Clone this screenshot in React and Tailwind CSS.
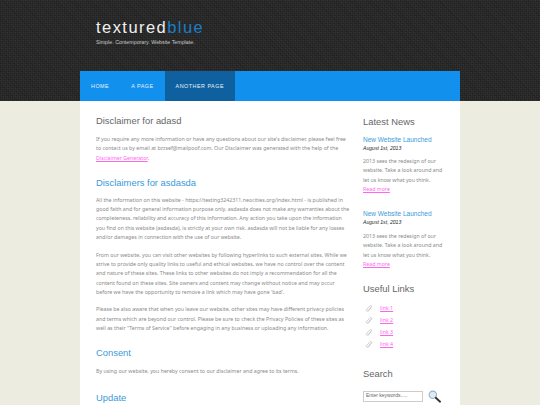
import React from 'react';

function Clip() {
  return (
    <svg viewBox="0 0 12 12" className="w-[8px] h-[8px] text-[#bdbdbd]" fill="none" stroke="currentColor" strokeWidth="1.1">
      <path d="M9.5 3 4.2 8.6c-.8.8-2 .7-2.3.1-.4-.6-.2-1.4.4-2l5-5.4c.7-.7 1.8-.8 2.4-.2.6.6.5 1.6-.2 2.4L4.6 9.9" />
    </svg>
  );
}

function NewsItem() {
  return (
    <div>
      <h3 className='text-[6.5px] leading-[9px] text-[#3a9ad9] font-["Liberation_Sans",sans-serif]'>New Website Launched</h3>
      <h4 className='text-[5.1px] leading-[9px] italic text-[#222] font-["Liberation_Sans",sans-serif]'>August 1st, 2013</h4>
      <p className="mt-[4.5px] leading-[9.3px]">
        2013 sees the redesign of our<br />website. Take a look around and<br />let us know what you think.<br />
        <a className="underline text-[#ff66ee]">Read more</a>
      </p>
    </div>
  );
}

export default function App() {
  return (
    <div className='h-[405px] overflow-hidden bg-[#ecede0] font-["Noto_Sans",sans-serif] text-[5.25px] text-[#8a8a8a]'>
      <header className="h-[101px] bg-[#2a2a2a] bg-[repeating-linear-gradient(0deg,rgba(255,255,255,0.04)_0px,rgba(255,255,255,0.04)_1px,transparent_1px,transparent_2px),repeating-linear-gradient(90deg,rgba(0,0,0,0.16)_0px,rgba(0,0,0,0.16)_1px,transparent_1px,transparent_2px),repeating-linear-gradient(45deg,rgba(0,0,0,0.14)_0px,rgba(0,0,0,0.14)_1px,transparent_1px,transparent_3px)] pl-[80px] flex flex-col">
        <div className="pl-[16px] pt-[18px] h-[71px]">
          <h1 className='text-[16.5px] leading-[19px] tracking-[1.45px] text-[#f0f0f0] font-["Liberation_Sans",sans-serif]'>
            textured<span className="text-[#1a7ec8]">blue</span>
          </h1>
          <p className='mt-[1.5px] text-[5.3px] leading-[7px] text-[#c9c9c9] font-["Liberation_Sans",sans-serif]'>Simple. Contemporary. Website Template.</p>
        </div>
        <nav className='w-[380px] h-[30px] bg-[#1290ee] flex text-[5.4px] tracking-[0.5px] text-[#e6f3fd] font-["Liberation_Sans",sans-serif]'>
          <a className="px-[11px] flex items-center">HOME</a>
          <a className="px-[11px] flex items-center">A PAGE</a>
          <a className="px-[11px] flex items-center bg-[#0f609f]">ANOTHER PAGE</a>
        </nav>
      </header>

      <div className="ml-[80px] w-[380px] h-[304px] bg-white flex overflow-hidden">
        <main className="w-[283px] shrink-0 pl-[16px] pt-[14px]">
          <h2 className='text-[9.4px] leading-[12px] text-[#666] font-["Liberation_Sans",sans-serif]'>Disclaimer for adasd</h2>
          <p className="mt-[8px] leading-[9.3px]">
            If you require any more information or have any questions about our site's disclaimer, please feel free<br />
            to contact us by email at bzzsef@mailpoof.com. Our Disclaimer was generated with the help of the<br />
            <a className="underline text-[#ff66ee]">Disclaimer Generator</a>.
          </p>
          <h2 className='mt-[13px] text-[9.4px] leading-[13px] text-[#3a9ad9] font-["Liberation_Sans",sans-serif]'>Disclaimers for asdasda</h2>
          <p className="mt-[7px] leading-[9.3px]">
            All the information on this website - https://testing3242311.neocities.org/index.html - is published in<br />
            good faith and for general information purpose only. asdasda does not make any warranties about the<br />
            completeness, reliability and accuracy of this information. Any action you take upon the information<br />
            you find on this website (asdasda), is strictly at your own risk. asdasda will not be liable for any losses<br />
            and/or damages in connection with the use of our website.
          </p>
          <p className="mt-[8.5px] leading-[9.3px]">
            From our website, you can visit other websites by following hyperlinks to such external sites. While we<br />
            strive to provide only quality links to useful and ethical websites, we have no control over the content<br />
            and nature of these sites. These links to other websites do not imply a recommendation for all the<br />
            content found on these sites. Site owners and content may change without notice and may occur<br />
            before we have the opportunity to remove a link which may have gone 'bad'.
          </p>
          <p className="mt-[8px] leading-[9.3px]">
            Please be also aware that when you leave our website, other sites may have different privacy policies<br />
            and terms which are beyond our control. Please be sure to check the Privacy Policies of these sites as<br />
            well as their "Terms of Service" before engaging in any business or uploading any information.
          </p>
          <h2 className='mt-[13px] text-[9.4px] leading-[13px] text-[#3a9ad9] font-["Liberation_Sans",sans-serif]'>Consent</h2>
          <p className="mt-[8px] leading-[9.3px]">By using our website, you hereby consent to our disclaimer and agree to its terms.</p>
          <h2 className='mt-[14px] text-[9.4px] leading-[13px] text-[#3a9ad9] font-["Liberation_Sans",sans-serif]'>Update</h2>
        </main>

        <aside className="flex-1 pt-[14px]">
          <h2 className='text-[9.4px] leading-[13px] text-[#666] font-["Liberation_Sans",sans-serif]'>Latest News</h2>
          <div className="mt-[6.5px] flex flex-col gap-[15.3px]">
            <NewsItem />
            <NewsItem />
          </div>
          <h2 className='mt-[13px] text-[9.4px] leading-[13px] text-[#666] font-["Liberation_Sans",sans-serif]'>Useful Links</h2>
          <ul className="mt-[9px] flex flex-col gap-[3px]">
            {['link 1', 'link 2', 'link 3', 'link 4'].map((l) => (
              <li key={l} className="flex items-center h-[9px] pl-[2px] gap-[7px]">
                <Clip />
                <a className="underline text-[#ff66ee]">{l}</a>
              </li>
            ))}
          </ul>
          <h2 className='mt-[18px] text-[9.4px] leading-[13px] text-[#666] font-["Liberation_Sans",sans-serif]'>Search</h2>
          <div className="mt-[9.5px] flex items-center gap-[5px]">
            <div className='w-[60px] h-[11px] border border-[#ccc] pl-[2px] flex items-center text-[5px] text-[#666] font-["Liberation_Sans",sans-serif]'>Enter keywords.....</div>
            <svg viewBox="0 0 14 14" className="w-[13px] h-[13px]">
              <circle cx="5.2" cy="5.2" r="4" fill="#dcebf5" stroke="#9db4c4" strokeWidth="1.2" />
              <path d="M8.4 8.4 13 12.6" stroke="#333" strokeWidth="2" strokeLinecap="round" />
            </svg>
          </div>
        </aside>
      </div>
    </div>
  );
}
